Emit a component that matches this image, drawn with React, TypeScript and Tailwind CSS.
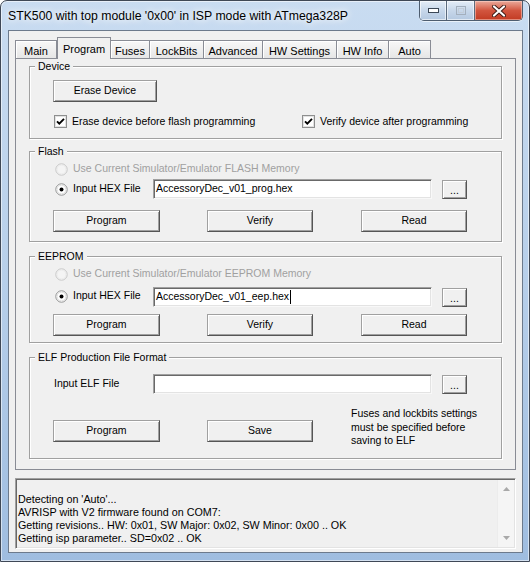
import type { ReactNode } from "react"

const ui = "font-['Liberation_Sans',Arial,sans-serif] text-[10.5px] text-black"

function Btn({ className, children }: { className: string; children: ReactNode }) {
  return (
    <div
      className={`${className} h-[22px] shrink-0 flex items-center justify-center border border-t-[#a0a0a0] border-l-[#a0a0a0] border-r-[#555] border-b-[#555] bg-[#f0f0f0] shadow-[inset_1px_1px_0_#fff,inset_-1px_-1px_0_#a0a0a0]`}
    >
      {children}
    </div>
  )
}

function Dots() {
  return (
    <div className="w-[25px] h-[19px] shrink-0 flex items-end justify-center pb-[3px] border border-t-[#a0a0a0] border-l-[#a0a0a0] border-r-[#555] border-b-[#555] bg-[#f0f0f0] shadow-[inset_1px_1px_0_#fff,inset_-1px_-1px_0_#a0a0a0] leading-[10px]">
      ...
    </div>
  )
}

function TextBox({ children }: { children?: ReactNode }) {
  return (
    <div className="w-[279px] h-[20px] shrink-0 flex items-center pl-[2px] bg-white border border-t-[#a0a0a0] border-l-[#a0a0a0] border-r-[#f8f8f8] border-b-[#f8f8f8] shadow-[inset_1px_1px_0_#696969,inset_-1px_-1px_0_#e3e3e3]">
      {children}
    </div>
  )
}

function Check() {
  return (
    <svg width="13" height="13" viewBox="0 0 13 13" className="shrink-0">
      <rect x="0.5" y="0.5" width="12" height="12" fill="#fff" stroke="#8e8f8f" />
      <rect x="1.5" y="1.5" width="10" height="10" fill="none" stroke="#e2e2e2" />
      <path d="M3 6.3L5.3 8.6L10 3.8" fill="none" stroke="#000" strokeWidth="1.9" />
    </svg>
  )
}

function Radio({ on, disabled }: { on?: boolean; disabled?: boolean }) {
  return (
    <svg width="13" height="13" viewBox="0 0 13 13" className="shrink-0">
      <circle cx="6.5" cy="6.5" r="5.7" fill={disabled ? "#f4f4f4" : "#fff"} stroke={disabled ? "#c6c6c6" : "#8e8f8f"} />
      <circle cx="6.5" cy="6.5" r="4.4" fill="none" stroke={disabled ? "#ececec" : "#dedede"} />
      {on && <circle cx="6.5" cy="6.5" r="2" fill="#000" />}
    </svg>
  )
}

function Group({ title, className, children }: { title: string; className: string; children: ReactNode }) {
  return (
    <div
      className={`${className} relative w-[473px] border border-[#a0a0a0] shadow-[inset_1px_1px_0_#fff,1px_1px_0_#fff]`}
    >
      <div className="absolute left-[5px] -top-[8px] px-[3px] leading-[14px] bg-[#f0f0f0]">{title}</div>
      {children}
    </div>
  )
}

function Tab({ label, active, className }: { label: string; active?: boolean; className: string }) {
  if (active) {
    return (
      <div
        className={`${className} relative z-10 h-[22px] -mb-px flex items-start justify-center pt-[3px] border border-b-0 border-[#898c95] bg-[#f0f0f0]`}
      >
        {label}
      </div>
    )
  }
  return (
    <div
      className={`${className} h-[18px] flex items-start justify-center pt-[2px] border border-b-0 border-l-0 first:border-l border-[#898c95] bg-gradient-to-b from-[#f8f8f8] to-[#e6e6e6] shadow-[inset_1px_1px_0_#fff]`}
    >
      {label}
    </div>
  )
}

function TitleButtons() {
  return (
    <div className="ml-auto mr-[6px] flex h-[20px] rounded-b-[5px] border border-t-0 border-[#4e5d6f] overflow-hidden shadow-[0_1px_0_rgba(255,255,255,0.6)]">
      <div className="w-[27px] flex items-center justify-center border-r border-[#5b6a7d] bg-gradient-to-b from-[#e4edf7] via-[#c7d7ea] to-[#b4c8e0] shadow-[inset_0_0_0_1px_rgba(255,255,255,0.6)]">
        <svg width="11" height="5" viewBox="0 0 11 5">
          <rect x="0.5" y="0.5" width="10" height="4" fill="#fff" stroke="#3b4756" />
        </svg>
      </div>
      <div className="w-[28px] flex items-center justify-center border-r border-[#5b6a7d] bg-gradient-to-b from-[#e4edf7] via-[#c7d7ea] to-[#b4c8e0] shadow-[inset_0_0_0_1px_rgba(255,255,255,0.6)]">
        <svg width="10" height="9" viewBox="0 0 10 9">
          <rect x="0.5" y="0.5" width="9" height="8" fill="none" stroke="#a3afbd" />
          <rect x="2.5" y="2.5" width="5" height="4" fill="none" stroke="#c2ccd8" />
        </svg>
      </div>
      <div className="w-[47px] flex items-center justify-center bg-gradient-to-b from-[#e9a99b] via-[#d2553f] to-[#c23a22] shadow-[inset_0_0_0_1px_rgba(255,220,210,0.5)]">
        <svg width="14" height="12" viewBox="0 0 14 12">
          <path d="M2 1.5L12 10.5M12 1.5L2 10.5" stroke="#3c1c17" strokeWidth="4" strokeLinecap="round" />
          <path d="M2 1.5L12 10.5M12 1.5L2 10.5" stroke="#fff" strokeWidth="2.2" strokeLinecap="round" />
        </svg>
      </div>
    </div>
  )
}

export default function App() {
  return (
    <div className={`${ui} w-[530px] h-[562px] flex flex-col rounded-t-[7px] border border-[#3f4856] bg-gradient-to-b from-[#c9dcf1] via-[#b7cfea] to-[#9fbde0] shadow-[inset_0_0_0_1px_rgba(255,255,255,0.55)]`}>
      {/* title bar */}
      <div className="h-[29px] shrink-0 flex items-start">
        <div className="ml-[7px] mt-[7px] leading-[16px] text-[12.25px] [text-shadow:0_0_6px_#fff,0_0_10px_#fff]">
          STK500 with top module '0x00' in ISP mode with ATmega328P
        </div>
        <TitleButtons />
      </div>

      {/* client area */}
      <div className="mx-[7px] mb-[8px] w-[515px] flex-1 flex flex-col border border-[#6c7a8c] bg-[#f0f0f0]">
        {/* tabs */}
        <div className="ml-[6px] mt-[6px] h-[21px] flex items-end text-[11px]">
          <Tab label="Main" className="w-[42px]" />
          <Tab label="Program" active className="w-[54px]" />
          <Tab label="Fuses" className="w-[39px]" />
          <Tab label="LockBits" className="w-[54px]" />
          <Tab label="Advanced" className="w-[59px]" />
          <Tab label="HW Settings" className="w-[74px]" />
          <Tab label="HW Info" className="w-[52px]" />
          <Tab label="Auto" className="w-[42px]" />
        </div>

        {/* tab panel */}
        <div className="ml-[6px] w-[501px] h-[412px] shrink-0 border border-[#898c95] pl-[13px] pt-[7px]">
          <Group title="Device" className="h-[73px]">
            <div className="ml-[23px] mt-[13px]">
              <Btn className="w-[104px]">Erase Device</Btn>
            </div>
            <div className="mt-[13px] ml-[24px] flex items-center h-[13px]">
              <div className="w-[248px] flex items-center gap-[5px]">
                <Check />
                <span>Erase device before flash programming</span>
              </div>
              <div className="flex items-center gap-[5px]">
                <Check />
                <span>Verify device after programming</span>
              </div>
            </div>
          </Group>

          <Group title="Flash" className="mt-[12px] h-[91px]">
            <div className="ml-[25px] mt-[10px] h-[14px] flex items-center gap-[5px] text-[#a0a0a0]">
              <Radio disabled />
              <span>Use Current Simulator/Emulator FLASH Memory</span>
            </div>
            <div className="ml-[25px] mt-[3px] h-[20px] flex items-center">
              <div className="w-[98px] flex items-center gap-[5px]">
                <Radio on />
                <span>Input HEX File</span>
              </div>
              <TextBox>AccessoryDec_v01_prog.hex</TextBox>
              <div className="ml-[10px]">
                <Dots />
              </div>
            </div>
            <div className="ml-[23px] mt-[11px] flex">
              <Btn className="w-[107px]">Program</Btn>
              <Btn className="w-[106px] ml-[47px]">Verify</Btn>
              <Btn className="w-[106px] ml-[48px]">Read</Btn>
            </div>
          </Group>

          <Group title="EEPROM" className="mt-[14px] h-[87px]">
            <div className="ml-[25px] mt-[10px] h-[14px] flex items-center gap-[5px] text-[#a0a0a0]">
              <Radio disabled />
              <span>Use Current Simulator/Emulator EEPROM Memory</span>
            </div>
            <div className="ml-[25px] mt-[6px] h-[20px] flex items-center">
              <div className="w-[98px] flex items-center gap-[5px] -mt-[2px]">
                <Radio on />
                <span>Input HEX File</span>
              </div>
              <TextBox>
                AccessoryDec_v01_eep.hex
                <span className="inline-block w-px h-[14px] bg-black ml-px" />
              </TextBox>
              <div className="ml-[10px]">
                <Dots />
              </div>
            </div>
            <div className="ml-[23px] mt-[7px] flex">
              <Btn className="w-[107px]">Program</Btn>
              <Btn className="w-[106px] ml-[47px]">Verify</Btn>
              <Btn className="w-[106px] ml-[48px]">Read</Btn>
            </div>
          </Group>

          <Group title="ELF Production File Format" className="mt-[14px] h-[102px]">
            <div className="ml-[24px] mt-[16px] h-[20px] flex items-center">
              <span className="w-[99px]">Input ELF File</span>
              <TextBox />
              <div className="ml-[10px]">
                <Dots />
              </div>
            </div>
            <div className="ml-[23px] mt-[13px] flex items-start">
              <Btn className="w-[107px] mt-[13px]">Program</Btn>
              <Btn className="w-[106px] ml-[47px] mt-[13px]">Save</Btn>
              <div className="ml-[38px] leading-[13.5px]">
                Fuses and lockbits settings
                <br />
                must be specified before
                <br />
                saving to ELF
              </div>
            </div>
          </Group>
        </div>

        {/* log */}
        <div className="ml-[6px] mt-[8px] w-[501px] h-[71px] shrink-0 flex border border-t-[#a0a0a0] border-l-[#a0a0a0] border-r-white border-b-white shadow-[inset_1px_1px_0_#696969,inset_-1px_-1px_0_#e3e3e3] overflow-hidden">
          <div className="flex-1 pl-[2px] pt-[14px] leading-[13px] whitespace-nowrap text-[10.75px]">
            <div>Detecting on 'Auto'...</div>
            <div>AVRISP with V2 firmware found on COM7:</div>
            <div>Getting revisions.. HW: 0x01, SW Major: 0x02, SW Minor: 0x00 .. OK</div>
            <div>Getting isp parameter.. SD=0x02 .. OK</div>
          </div>
          <div className="w-[17px] my-[1px] mr-[1px] flex flex-col items-center justify-between py-[7px] bg-[#f5f5f5] border-l border-[#ececec]">
            <svg width="7" height="4" viewBox="0 0 7 4">
              <path d="M0 4L3.5 0L7 4Z" fill="#a9a9a9" />
            </svg>
            <svg width="7" height="4" viewBox="0 0 7 4">
              <path d="M0 0L3.5 4L7 0Z" fill="#a9a9a9" />
            </svg>
          </div>
        </div>
      </div>
    </div>
  )
}
